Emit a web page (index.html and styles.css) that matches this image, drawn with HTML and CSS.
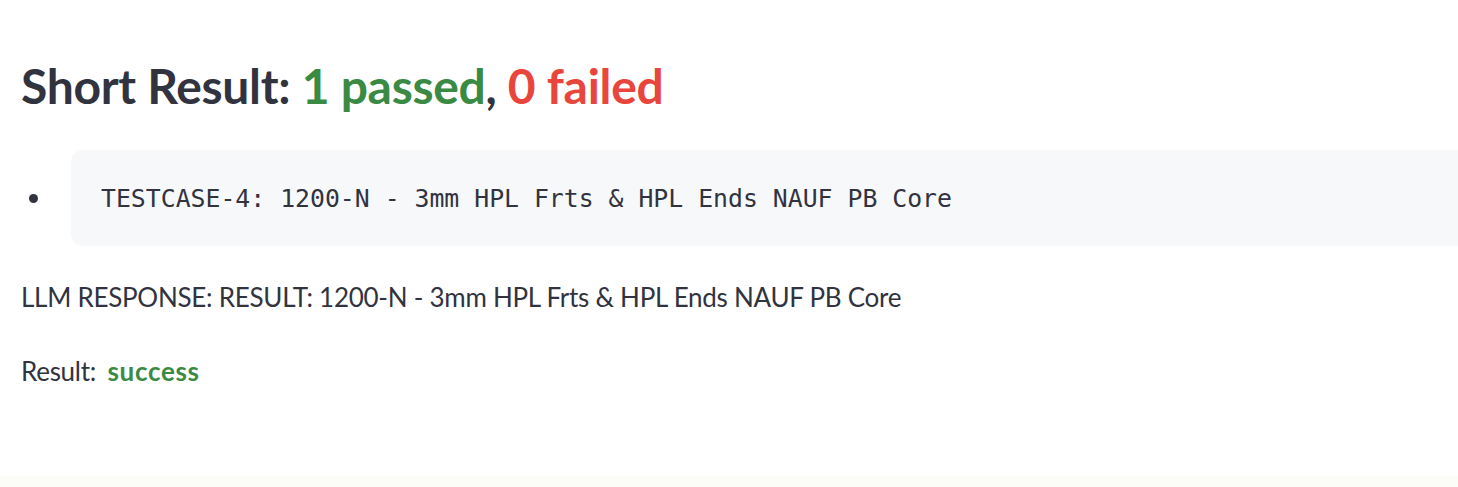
FILE: index.html
```html
<!DOCTYPE html>
<html>
<head>
<meta charset="utf-8">
<link rel="stylesheet" href="styles.css">
</head>
<body>
<main class="page">
  <h3 class="title">Short Result: <span class="pass">1 passed</span>, <span class="fail">0 failed</span></h3>
  <ul class="cases">
    <li class="case"><span class="bullet"></span><pre class="code"><code>TESTCASE-4: 1200-N - 3mm HPL Frts &amp; HPL Ends NAUF PB Core</code></pre></li>
  </ul>
  <p class="line">LLM RESPONSE: RESULT: 1200-N - 3mm HPL Frts &amp; HPL Ends NAUF PB Core</p>
  <p class="line">Result: <strong class="success">success</strong></p>
</main>
<footer class="strip"></footer>
</body>
</html>
```

FILE: styles.css
```css
html, body {
  margin: 0;
  padding: 0;
  background: #ffffff;
  overflow: hidden;
}
body {
  height: 487px;
  display: flex;
  flex-direction: column;
  font-family: Lato, "Noto Sans", sans-serif;
  color: #31333f;
}
.page {
  flex: 1;
  padding: 0 0 0 21px;
}
.title {
  margin: 56px 0 0 0;
  font-size: 48px;
  line-height: 60px;
  font-weight: 700;
  letter-spacing: -0.3px;
  color: #31333f;
}
.pass { color: #3b8a44; }
.fail { color: #e8463c; }
.cases {
  list-style: none;
  margin: 34px 0 0 0;
  padding: 0;
}
.case {
  display: flex;
  align-items: center;
}
.bullet {
  width: 9px;
  height: 9px;
  border-radius: 50%;
  background: #31333f;
  margin: 0 0 0 8px;
  flex: none;
}
.code {
  flex: 1;
  margin: 0 0 0 33px;
  height: 96px;
  box-sizing: border-box;
  display: flex;
  align-items: center;
  padding: 0 0 0 30px;
  background: #f7f8fa;
  border-radius: 12px 0 0 12px;
  font-family: "DejaVu Sans Mono", "Liberation Mono", monospace;
  font-size: 24.8px;
  color: #31333f;
}
.line {
  margin: 30px 0 0 0;
  font-size: 26px;
  line-height: 42px;
  letter-spacing: -0.27px;
}
.line + .line {
  margin-top: 32px;
}
.success {
  display: inline-block;
  margin-left: 5px;
  color: #3b8a44;
  font-weight: 700;
  letter-spacing: 0.7px;
}
.strip {
  height: 11px;
  background: #fcfdf6;
}
```
